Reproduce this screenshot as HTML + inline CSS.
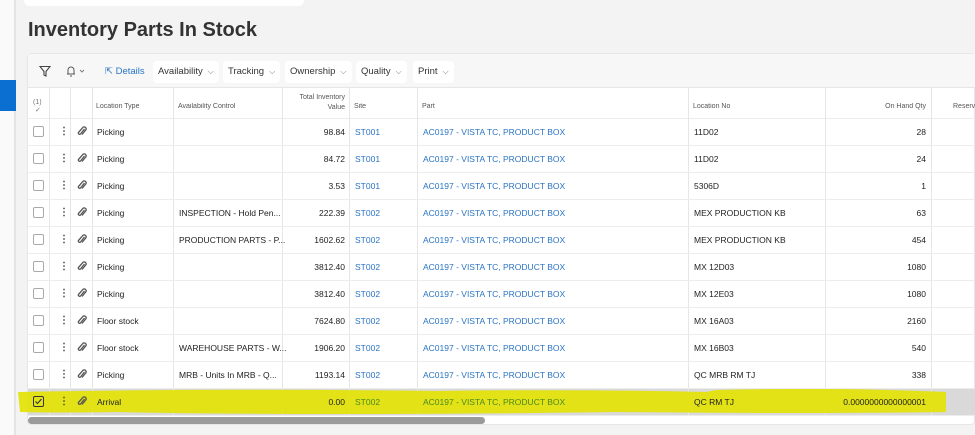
<!DOCTYPE html>
<html><head><meta charset="utf-8"><style>
*{margin:0;padding:0;box-sizing:border-box}
body{width:975px;height:435px;overflow:hidden;background:#f3f3f4;font-family:"Liberation Sans",sans-serif;position:relative;color:#222}
.abs{position:absolute}
.side{left:0;top:0;width:16px;height:435px;background:#fafafa;border-right:2px solid #e4e4e6}
.blue{left:0;top:80px;width:16px;height:31px;background:#0b6fd1}
.crumb{left:24px;top:-4px;width:280px;height:10px;background:#fff;border-radius:0 0 6px 6px}
h1{position:absolute;left:28px;top:19px;font-size:20px;font-weight:bold;color:#333}
.card{left:27px;top:53px;width:948px;height:372px;background:#fff;border:1px solid #e6e6e6;border-radius:4px}
.tb{left:28px;top:54px;width:947px;height:34px;background:#f7f7f7;border-bottom:1px solid #e6e6e6}
.btn{position:absolute;top:61px;height:22px;background:#fff;border-radius:4px;font-size:9.5px;line-height:22px;padding:0 5px;color:#333}
.btn i{font-style:normal;color:#777;font-size:8px;margin-left:5px}
.c{position:absolute;font-size:8.5px;white-space:nowrap;overflow:hidden}
.vl{position:absolute;top:88px;height:327px;width:1px;background:#e6e6e6}
.hl{position:absolute;left:28px;width:947px;height:1px;background:#ececec}
.lnk{color:#2a74c4}
.cb{position:absolute;left:33px;width:11px;height:11px;border:1px solid #aaa;border-radius:2px;background:#fff}
.dots{position:absolute;left:59px;font-size:10px;font-weight:bold;color:#444;line-height:1}
</style></head><body>
<div class="abs side"></div><div class="abs blue"></div>
<div class="abs crumb"></div>
<h1>Inventory Parts In Stock</h1>
<div class="abs card"></div>
<div class="abs tb"></div>
<svg class="abs" style="left:39px;top:65px" width="12" height="12" viewBox="0 0 12 12"><path d="M1 1.5h10L7 6.5V11L5 10V6.5Z" fill="none" stroke="#444" stroke-width="1.1"/></svg>
<svg class="abs" style="left:65px;top:65px" width="20" height="12" viewBox="0 0 20 12"><path d="M2 9h8M3 9V5a3 3 0 016 0v4M5 11h2" fill="none" stroke="#555" stroke-width="1"/><path d="M15 5l2 2 2-2" fill="none" stroke="#777" stroke-width="0.9"/></svg>
<div class="abs" style="left:105px;top:66px;font-size:9.5px;color:#2a74c4">⇱ Details</div>
<div class="btn" style="left:153px">Availability<i>⌵</i></div>
<div class="btn" style="left:223px">Tracking<i>⌵</i></div>
<div class="btn" style="left:285px">Ownership<i>⌵</i></div>
<div class="btn" style="left:356px">Quality<i>⌵</i></div>
<div class="btn" style="left:413px">Print<i>⌵</i></div>

<div class="hl" style="top:118px"></div>
<div class="abs" style="left:28px;top:388px;width:947px;height:27px;background:#d9d9d9"></div>

<div class="c" style="left:33px;top:99px;font-size:7px;color:#777">(1)<br>&nbsp;✓</div>
<div class="c" style="left:96px;top:103px;font-size:7px;color:#555">Location Type</div>
<div class="c" style="left:178px;top:103px;font-size:7px;color:#555">Availability Control</div>
<div class="c" style="left:282px;top:93px;width:63px;text-align:right;font-size:7px;color:#555;line-height:10px">Total Inventory<br>Value</div>
<div class="c" style="left:354px;top:103px;font-size:7px;color:#555">Site</div>
<div class="c" style="left:422px;top:103px;font-size:7px;color:#555">Part</div>
<div class="c" style="left:693px;top:103px;font-size:7px;color:#555">Location No</div>
<div class="c" style="left:825px;top:103px;width:101px;text-align:right;font-size:7px;color:#555">On Hand Qty</div>
<div class="c" style="left:953px;top:103px;font-size:7px;color:#555">Reserv</div>

<div class="vl" style="left:49px"></div><div class="vl" style="left:70px"></div><div class="vl" style="left:92px"></div><div class="vl" style="left:173px"></div><div class="vl" style="left:282px"></div><div class="vl" style="left:349px"></div><div class="vl" style="left:417px"></div><div class="vl" style="left:688px"></div><div class="vl" style="left:825px"></div><div class="vl" style="left:931px"></div>
<svg class="abs" style="left:16px;top:386px" width="940" height="32"><path d="M2 6 Q200 2 420 5 Q560 3 690 6 L700 4 Q820 1 930 6 L930 26 Q800 28 600 26 Q300 30 100 26 Q40 27 4 26Z" fill="#e2e200" opacity="0.9"/></svg>

<div id="rows"></div>
<div class="abs" style="left:28px;top:417px;width:457px;height:7px;background:#9a9a9a;border-radius:4px"></div>
<script>
var d=[["Picking","","98.84","ST001","11D02","28"],["Picking","","84.72","ST001","11D02","24"],["Picking","","3.53","ST001","5306D","1"],["Picking","INSPECTION - Hold Pen...","222.39","ST002","MEX PRODUCTION KB","63"],["Picking","PRODUCTION PARTS - P...","1602.62","ST002","MEX PRODUCTION KB","454"],["Picking","","3812.40","ST002","MX 12D03","1080"],["Picking","","3812.40","ST002","MX 12E03","1080"],["Floor stock","","7624.80","ST002","MX 16A03","2160"],["Floor stock","WAREHOUSE PARTS - W...","1906.20","ST002","MX 16B03","540"],["Picking","MRB - Units In MRB - Q...","1193.14","ST002","QC MRB RM TJ","338"],["Arrival","","0.00","ST002","QC RM TJ","0.0000000000000001"]];
var h="";
d.forEach(function(r,i){var t=118+27*i,y=t+9,last=i==10;
h+='<div class="hl" style="top:'+(t+27)+'px"></div>';
h+='<div class="cb" style="top:'+(t+8)+'px;'+(last?'border-color:#333;background:transparent':'')+'">'+(last?'<svg width="9" height="9" style="position:absolute;left:0;top:0"><path d="M1.5 4.5l2 2 4-4.5" fill="none" stroke="#333" stroke-width="1.1"/></svg>':'')+'</div>';
h+='<div class="dots" style="top:'+(t+9)+'px">⋮</div>';
h+='<svg class="abs" style="left:77px;top:'+(t+8)+'px" width="10" height="11" viewBox="0 0 10 11"><path d="M7.5 3L3.5 8a1.3 1.3 0 01-2-1.6L6 1.3a2 2 0 013 2.4L5 8.5" fill="none" stroke="#555" stroke-width="1.3"/></svg>';
h+='<div class="c" style="left:97px;top:'+y+'px">'+r[0]+'</div>';
h+='<div class="c" style="left:179px;top:'+y+'px">'+r[1]+'</div>';
h+='<div class="c" style="left:282px;top:'+y+'px;width:63px;text-align:right">'+r[2]+'</div>';
h+='<div class="c lnk" style="left:355px;top:'+y+'px'+(last?';color:#4a8a20':'')+'">'+r[3]+'</div>';
h+='<div class="c lnk" style="left:423px;top:'+y+'px'+(last?';color:#4a8a20':'')+'">AC0197 - VISTA TC, PRODUCT BOX</div>';
h+='<div class="c" style="left:694px;top:'+y+'px">'+r[4]+'</div>';
h+='<div class="c" style="left:825px;top:'+y+'px;width:101px;text-align:right">'+r[5]+'</div>';
});
document.getElementById("rows").innerHTML=h;
</script>
</body></html>
